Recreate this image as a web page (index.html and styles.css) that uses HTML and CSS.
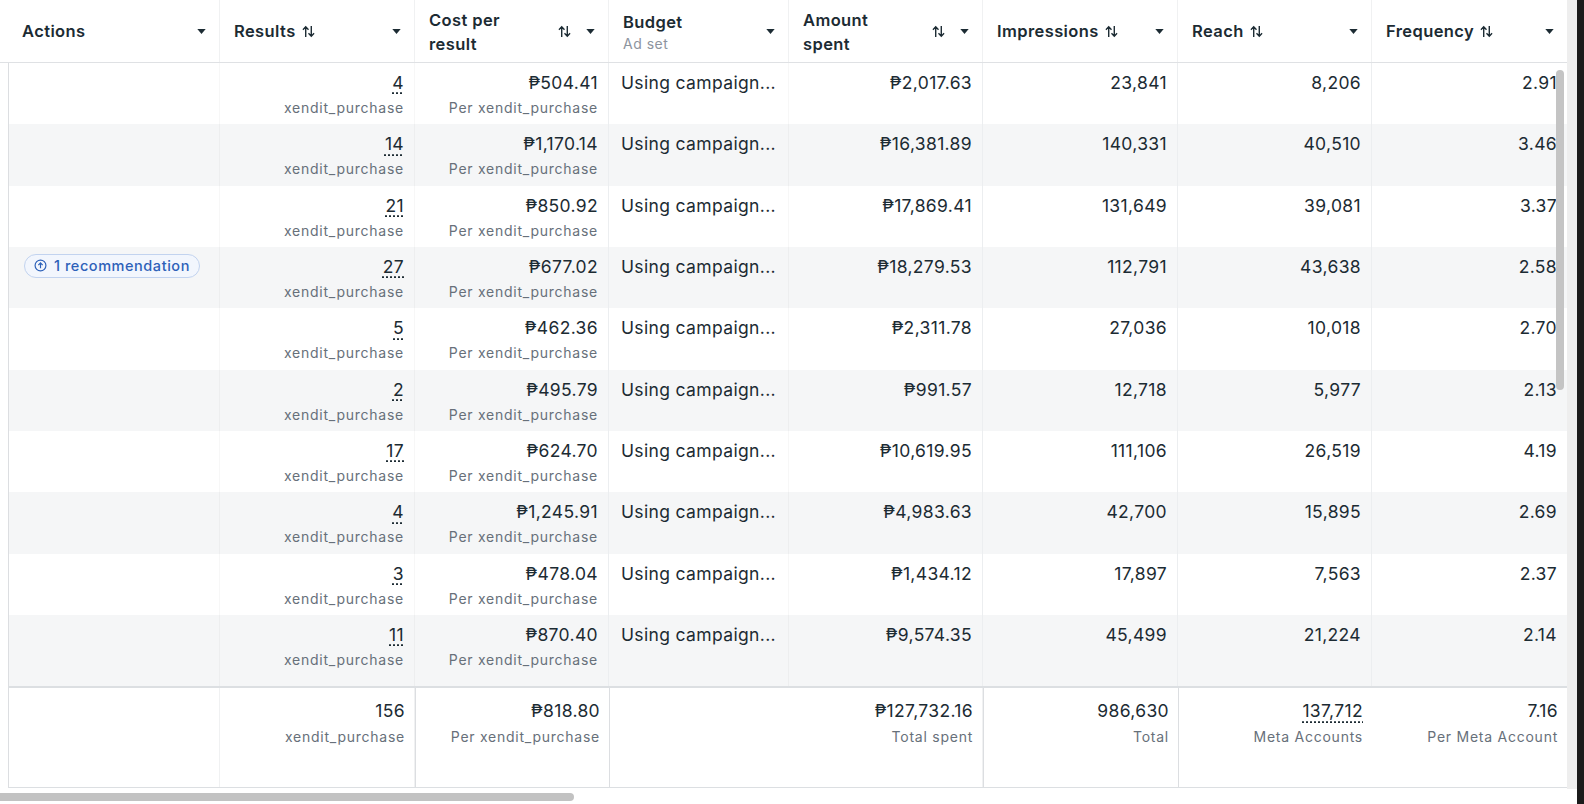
FILE: index.html
```html
<!DOCTYPE html>
<html>
<head>
<meta charset="utf-8">
<link rel="stylesheet" href="styles.css">
</head>
<body>
<div class="page">
  <div class="main">
    <div class="area">
      <div class="table">
        <div class="head">
          <div class="hcell first"><div class="hlabel">Actions</div><svg class="dd" viewBox="0 0 10 6"><polygon points="0,0 10,0 5,6"/></svg></div>
          <div class="hcell"><div class="hlabel">Results <svg class="sort" viewBox="0 0 16 14"><path d="M5 13V2M2 5l3-3 3 3M11 1v11M8 9l3 3 3-3"/></svg></div><svg class="dd" viewBox="0 0 10 6"><polygon points="0,0 10,0 5,6"/></svg></div>
          <div class="hcell"><div class="hlabel two">Cost per<br>result</div><svg class="sort" viewBox="0 0 16 14"><path d="M5 13V2M2 5l3-3 3 3M11 1v11M8 9l3 3 3-3"/></svg><svg class="dd" viewBox="0 0 10 6"><polygon points="0,0 10,0 5,6"/></svg></div>
          <div class="hcell"><div class="hlabel two">Budget<span class="hsub">Ad set</span></div><svg class="dd" viewBox="0 0 10 6"><polygon points="0,0 10,0 5,6"/></svg></div>
          <div class="hcell"><div class="hlabel two">Amount<br>spent</div><svg class="sort" viewBox="0 0 16 14"><path d="M5 13V2M2 5l3-3 3 3M11 1v11M8 9l3 3 3-3"/></svg><svg class="dd" viewBox="0 0 10 6"><polygon points="0,0 10,0 5,6"/></svg></div>
          <div class="hcell"><div class="hlabel">Impressions <svg class="sort" viewBox="0 0 16 14"><path d="M5 13V2M2 5l3-3 3 3M11 1v11M8 9l3 3 3-3"/></svg></div><svg class="dd" viewBox="0 0 10 6"><polygon points="0,0 10,0 5,6"/></svg></div>
          <div class="hcell"><div class="hlabel">Reach <svg class="sort" viewBox="0 0 16 14"><path d="M5 13V2M2 5l3-3 3 3M11 1v11M8 9l3 3 3-3"/></svg></div><svg class="dd" viewBox="0 0 10 6"><polygon points="0,0 10,0 5,6"/></svg></div>
          <div class="hcell last"><div class="hlabel">Frequency <svg class="sort" viewBox="0 0 16 14"><path d="M5 13V2M2 5l3-3 3 3M11 1v11M8 9l3 3 3-3"/></svg></div><svg class="dd" viewBox="0 0 10 6"><polygon points="0,0 10,0 5,6"/></svg></div>
        </div>

        <div class="body">
          <div class="row">
            <div class="cell act"></div>
            <div class="cell"><div class="num dotted">4</div><div class="sub">xendit_purchase</div></div>
            <div class="cell"><div class="num">₱504.41</div><div class="sub">Per xendit_purchase</div></div>
            <div class="cell txt"><div class="num">Using campaign...</div></div>
            <div class="cell"><div class="num">₱2,017.63</div></div>
            <div class="cell"><div class="num">23,841</div></div>
            <div class="cell"><div class="num">8,206</div></div>
            <div class="cell"><div class="num">2.91</div></div>
          </div>
          <div class="row alt">
            <div class="cell act"></div>
            <div class="cell"><div class="num dotted">14</div><div class="sub">xendit_purchase</div></div>
            <div class="cell"><div class="num">₱1,170.14</div><div class="sub">Per xendit_purchase</div></div>
            <div class="cell txt"><div class="num">Using campaign...</div></div>
            <div class="cell"><div class="num">₱16,381.89</div></div>
            <div class="cell"><div class="num">140,331</div></div>
            <div class="cell"><div class="num">40,510</div></div>
            <div class="cell"><div class="num">3.46</div></div>
          </div>
          <div class="row">
            <div class="cell act"></div>
            <div class="cell"><div class="num dotted">21</div><div class="sub">xendit_purchase</div></div>
            <div class="cell"><div class="num">₱850.92</div><div class="sub">Per xendit_purchase</div></div>
            <div class="cell txt"><div class="num">Using campaign...</div></div>
            <div class="cell"><div class="num">₱17,869.41</div></div>
            <div class="cell"><div class="num">131,649</div></div>
            <div class="cell"><div class="num">39,081</div></div>
            <div class="cell"><div class="num">3.37</div></div>
          </div>
          <div class="row alt">
            <div class="cell act"><span class="badge"><svg class="bicon" viewBox="0 0 12 12"><circle cx="6" cy="6" r="5"/><path d="M6 8.5V3.8M4 5.6l2-2 2 2"/></svg>1 recommendation</span></div>
            <div class="cell"><div class="num dotted">27</div><div class="sub">xendit_purchase</div></div>
            <div class="cell"><div class="num">₱677.02</div><div class="sub">Per xendit_purchase</div></div>
            <div class="cell txt"><div class="num">Using campaign...</div></div>
            <div class="cell"><div class="num">₱18,279.53</div></div>
            <div class="cell"><div class="num">112,791</div></div>
            <div class="cell"><div class="num">43,638</div></div>
            <div class="cell"><div class="num">2.58</div></div>
          </div>
          <div class="row">
            <div class="cell act"></div>
            <div class="cell"><div class="num dotted">5</div><div class="sub">xendit_purchase</div></div>
            <div class="cell"><div class="num">₱462.36</div><div class="sub">Per xendit_purchase</div></div>
            <div class="cell txt"><div class="num">Using campaign...</div></div>
            <div class="cell"><div class="num">₱2,311.78</div></div>
            <div class="cell"><div class="num">27,036</div></div>
            <div class="cell"><div class="num">10,018</div></div>
            <div class="cell"><div class="num">2.70</div></div>
          </div>
          <div class="row alt">
            <div class="cell act"></div>
            <div class="cell"><div class="num dotted">2</div><div class="sub">xendit_purchase</div></div>
            <div class="cell"><div class="num">₱495.79</div><div class="sub">Per xendit_purchase</div></div>
            <div class="cell txt"><div class="num">Using campaign...</div></div>
            <div class="cell"><div class="num">₱991.57</div></div>
            <div class="cell"><div class="num">12,718</div></div>
            <div class="cell"><div class="num">5,977</div></div>
            <div class="cell"><div class="num">2.13</div></div>
          </div>
          <div class="row">
            <div class="cell act"></div>
            <div class="cell"><div class="num dotted">17</div><div class="sub">xendit_purchase</div></div>
            <div class="cell"><div class="num">₱624.70</div><div class="sub">Per xendit_purchase</div></div>
            <div class="cell txt"><div class="num">Using campaign...</div></div>
            <div class="cell"><div class="num">₱10,619.95</div></div>
            <div class="cell"><div class="num">111,106</div></div>
            <div class="cell"><div class="num">26,519</div></div>
            <div class="cell"><div class="num">4.19</div></div>
          </div>
          <div class="row alt">
            <div class="cell act"></div>
            <div class="cell"><div class="num dotted">4</div><div class="sub">xendit_purchase</div></div>
            <div class="cell"><div class="num">₱1,245.91</div><div class="sub">Per xendit_purchase</div></div>
            <div class="cell txt"><div class="num">Using campaign...</div></div>
            <div class="cell"><div class="num">₱4,983.63</div></div>
            <div class="cell"><div class="num">42,700</div></div>
            <div class="cell"><div class="num">15,895</div></div>
            <div class="cell"><div class="num">2.69</div></div>
          </div>
          <div class="row">
            <div class="cell act"></div>
            <div class="cell"><div class="num dotted">3</div><div class="sub">xendit_purchase</div></div>
            <div class="cell"><div class="num">₱478.04</div><div class="sub">Per xendit_purchase</div></div>
            <div class="cell txt"><div class="num">Using campaign...</div></div>
            <div class="cell"><div class="num">₱1,434.12</div></div>
            <div class="cell"><div class="num">17,897</div></div>
            <div class="cell"><div class="num">7,563</div></div>
            <div class="cell"><div class="num">2.37</div></div>
          </div>
          <div class="row alt lastrow">
            <div class="cell act"></div>
            <div class="cell"><div class="num dotted">11</div><div class="sub">xendit_purchase</div></div>
            <div class="cell"><div class="num">₱870.40</div><div class="sub">Per xendit_purchase</div></div>
            <div class="cell txt"><div class="num">Using campaign...</div></div>
            <div class="cell"><div class="num">₱9,574.35</div></div>
            <div class="cell"><div class="num">45,499</div></div>
            <div class="cell"><div class="num">21,224</div></div>
            <div class="cell"><div class="num">2.14</div></div>
          </div>
        </div>

        <div class="foot">
          <div class="fcell act"></div>
          <div class="fcell"><div class="num">156</div><div class="sub">xendit_purchase</div></div>
          <div class="fcell strong"><div class="num">₱818.80</div><div class="sub">Per xendit_purchase</div></div>
          <div class="fcell strong"></div>
          <div class="fcell"><div class="num">₱127,732.16</div><div class="sub">Total spent</div></div>
          <div class="fcell strong"><div class="num">986,630</div><div class="sub">Total</div></div>
          <div class="fcell strong"><div class="num dotted">137,712</div><div class="sub">Meta Accounts</div></div>
          <div class="fcell"><div class="num">7.16</div><div class="sub">Per Meta Account</div></div>
        </div>
      </div>
      <div class="strip"></div>
      <div class="vthumb"></div>
    </div>
    <div class="hscroll"><div class="hthumb"></div></div>
  </div>
  <div class="edge"></div>
</div>
</body>
</html>
```

FILE: styles.css
```css
html, body {
  margin: 0;
  padding: 0;
  background: #ffffff;
}
body {
  font-family: Inter, Roboto, "Noto Sans", "DejaVu Sans", sans-serif;
  color: #1c2b33;
  width: 1584px;
  height: 804px;
  overflow: hidden;
}
.page {
  display: flex;
  width: 1584px;
  height: 804px;
}
.main {
  width: 1577px;
  display: flex;
  flex-direction: column;
}
.edge {
  width: 7px;
  background: #1b1b1b;
}
.area {
  position: relative;
  display: flex;
  height: 789px;
}
.table {
  width: 1567px;
  display: flex;
  flex-direction: column;
}
.strip {
  width: 10px;
  background: #eeeeee;
}
.vthumb {
  position: absolute;
  left: 1556px;
  top: 70px;
  width: 8px;
  height: 320px;
  border-radius: 4px;
  background: #c4c4c4;
}
.head {
  display: grid;
  grid-template-columns: 220px 195px 194px 180px 194px 195px 194px 195px;
  height: 63px;
  border-bottom: 1px solid #dfe1e4;
  box-sizing: border-box;
}
.hcell {
  display: flex;
  align-items: center;
  padding: 0 13px 0 14px;
  border-right: 1px solid #f0f1f2;
  font-size: 16.5px;
  font-weight: 600;
  letter-spacing: 0.4px;
  color: #1c2b33;
}
.hcell.first { padding-left: 22px; }
.hcell.last { border-right: none; }
.hlabel {
  flex: 1;
  display: flex;
  align-items: center;
  gap: 5px;
  white-space: nowrap;
  line-height: 24px;
}
.hlabel.two {
  display: block;
  white-space: normal;
  padding-top: 1px;
}
.hsub {
  display: block;
  font-size: 14px;
  font-weight: 400;
  line-height: 20px;
  letter-spacing: 0.5px;
  color: #8d949e;
}
.sort {
  width: 15px;
  height: 13px;
  fill: none;
  stroke: #1c2b33;
  stroke-width: 1.5;
  flex: none;
}
.hcell > .sort {
  margin-right: 14px;
}
.dd {
  width: 9px;
  height: 5px;
  fill: #1c2b33;
  flex: none;
}
.body {
  margin-left: 8px;
  border-left: 1px solid #dcdee1;
}
.row {
  display: grid;
  grid-template-columns: 211px 195px 194px 180px 194px 195px 194px 195px;
  height: 61.33px;
  background: #ffffff;
}
.row.alt { background: #f5f6f7; }
.row.lastrow { height: 71.33px; }
.cell {
  padding: 9px 10px 0 12px;
  text-align: right;
  border-right: 1px solid #eceef0;
}
.cell:nth-child(1), .cell:nth-child(2), .cell:nth-child(4) {
  border-right-color: rgba(0,0,0,0.03);
}
.cell:last-child { border-right: none; }
.cell.txt { text-align: left; }
.cell.act {
  text-align: left;
  padding: 7px 0 0 15px;
}
.num {
  font-size: 17.5px;
  line-height: 22px;
  letter-spacing: 0.35px;
  color: #1c2b33;
  white-space: nowrap;
}
.dotted {
  text-decoration: underline dotted #1c2b33;
  text-underline-offset: 4px;
}
.sub {
  margin-top: 4px;
  font-size: 14px;
  line-height: 20px;
  letter-spacing: 0.75px;
  color: #67707a;
  white-space: nowrap;
}
.badge {
  display: inline-flex;
  align-items: center;
  gap: 7px;
  height: 22px;
  padding: 0 9px 0 9px;
  border: 1px solid #c2d3ef;
  border-radius: 12px;
  background: #f2f6fd;
  color: #2d61b9;
  font-size: 14.5px;
  font-weight: 500;
  letter-spacing: 0.55px;
}
.bicon {
  width: 13px;
  height: 13px;
  fill: none;
  stroke: #2d61b9;
  stroke-width: 1.1;
}
.foot {
  display: grid;
  grid-template-columns: 212px 195px 194px 180px 194px 195px 194px 195px;
  margin-left: 8px;
  border-top: 2px solid #dcdfe2;
  border-bottom: 1px solid #dcdfe2;
  height: 102px;
  box-sizing: border-box;
}
.fcell {
  padding: 12px 9px 0 12px;
  text-align: right;
  border-right: 1px solid #f0f1f2;
}
.fcell .sub { margin-top: 5px; }
.fcell.act { border-left: 1px solid #dcdee1; }
.fcell.strong { border-left: 1px solid #dcdee1; border-right: none; }
.fcell:last-child { border-right: none; }
.hscroll {
  flex: 1;
  display: flex;
  align-items: center;
}
.hthumb {
  width: 574px;
  height: 8px;
  border-radius: 0 4px 4px 0;
  background: #c2c2c2;
}
```
